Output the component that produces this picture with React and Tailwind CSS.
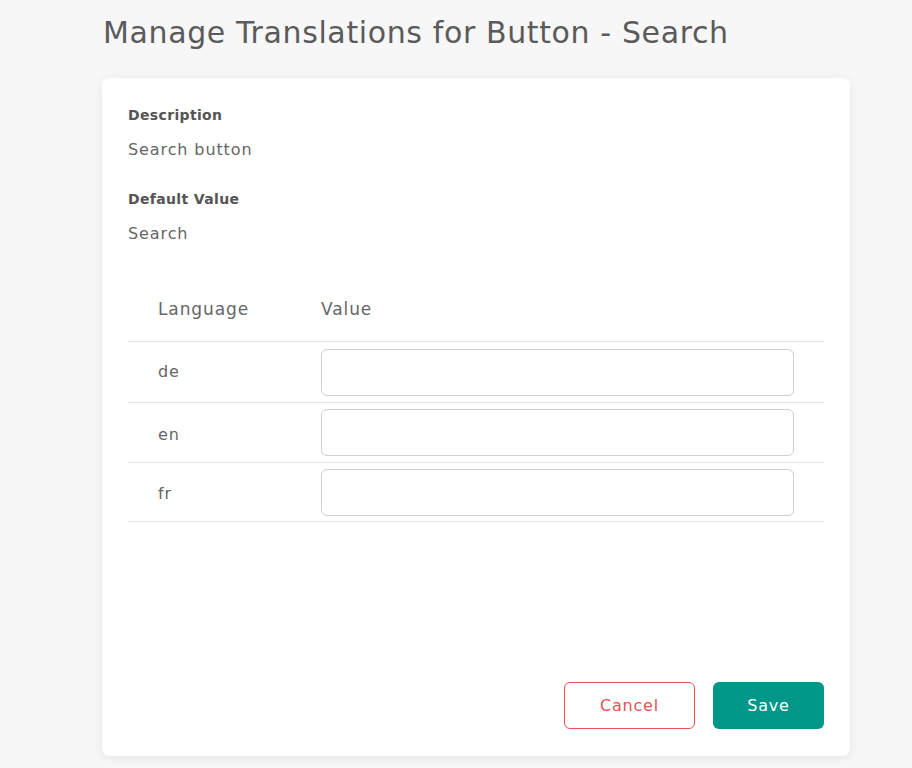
export default function App() {
  const rows = ["de", "en", "fr"];
  return (
    <div className="min-h-[768px] w-full bg-[#f7f7f7] font-['DejaVu_Sans',sans-serif] text-[#666]">
      <div className="ml-[102px] w-[748px] pt-[14px]">
        <h1 className="pl-px text-[30px] leading-[38px] text-[#5b5b5b] tracking-[0.62px]">
          Manage Translations for Button - Search
        </h1>
        <div className="mt-[26px] flex h-[678px] flex-col rounded-lg bg-white px-[26px] pb-[27px] pt-[26px] shadow-[0_2px_10px_rgba(0,0,0,0.08)]">
          <div className="text-[14px] font-bold leading-[22px] tracking-[0.35px] text-[#555]">Description</div>
          <div className="mt-[13px] text-[16px] leading-[22px] tracking-[0.9px]">Search button</div>
          <div className="mt-[27px] text-[14px] font-bold leading-[22px] tracking-[0.35px] text-[#555]">Default Value</div>
          <div className="mt-[13px] text-[16px] leading-[22px] tracking-[0.9px]">Search</div>
          <div className="mt-[40px]">
            <div className="flex h-[57px] items-center border-b border-[#e3e3e3] pb-[7px] text-[17px] tracking-[0.9px]">
              <div className="w-[193px] pl-[30px]">Language</div>
              <div>Value</div>
            </div>
            {rows.map((r, i) => (
              <div
                key={r}
                className={`flex items-center border-b border-[#e3e3e3] text-[16px] tracking-[0.9px] ${i === 0 ? "h-[61px]" : i === 1 ? "h-[60px]" : "h-[59px]"}`}
              >
                <div className={`w-[193px] pl-[30px] ${i === 0 ? "" : "pt-[4px]"}`}>{r}</div>
                <input className="h-[47px] w-[473px] rounded-[6px] border border-[#cfcfcf] bg-white px-3 outline-none" />
              </div>
            ))}
          </div>
          <div className="mt-auto flex justify-end gap-[18px]">
            <button className="h-[47px] w-[131px] rounded-[6px] border border-[#e55353] bg-white text-[16px] tracking-[0.8px] text-[#e55353]">
              Cancel
            </button>
            <button className="h-[47px] w-[111px] rounded-[6px] bg-[#009688] text-[16px] tracking-[0.8px] text-white">
              Save
            </button>
          </div>
        </div>
      </div>
    </div>
  );
}
